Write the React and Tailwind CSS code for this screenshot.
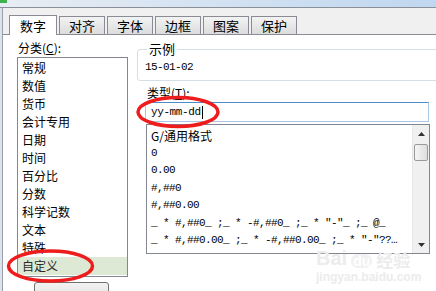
const categories = ['常规', '数值', '货币', '会计专用', '日期', '时间', '百分比', '分数', '科学记数', '文本', '特殊', '自定义'];

const formats = [
  '0',
  '0.00',
  '#,##0',
  '#,##0.00',
  '_ * #,##0_ ;_ * -#,##0_ ;_ * "-"_ ;_ @_',
  '_ * #,##0.00_ ;_ * -#,##0.00_ ;_ * "-"??…',
];

const tabs = ['对齐', '字体', '边框', '图案', '保护'];

const cjk = { fontFamily: '"Noto Sans CJK SC", "Liberation Sans", sans-serif' };
const mono = { fontFamily: '"Liberation Mono", "Noto Sans CJK SC", monospace' };

export default function App() {
  return (
    <div
      className="relative w-[436px] h-[291px] overflow-hidden bg-[#f0f0f0] text-black flex flex-col"
      style={cjk}
    >
      {/* window title strip */}
      <div className="h-[7px] shrink-0 bg-linear-to-r from-[#e7edf3] to-[#bfd7f0] flex">
        <div className="w-[7px] h-[3px] bg-[#3fb24e]" />
      </div>
      <div className="h-px shrink-0 bg-[#8a8f98]" />

      <div className="flex flex-1 min-h-0">
        <div className="w-[3px] shrink-0 bg-[#d8e3ee] border-r border-[#9aa0a6]" />

        <div className="flex-1 flex flex-col min-h-0">
          {/* tabs */}
          <div className="h-[26px] shrink-0 flex items-end pl-[6px] gap-[2px]">
            <div className="relative z-10 -mb-px h-[20px] w-[48px] bg-white border border-b-0 border-[#898c95] flex items-center justify-center text-[13px] leading-none">
              数字
            </div>
            {tabs.map((t) => (
              <div
                key={t}
                className="h-[18px] w-[46px] bg-linear-to-b from-[#f3f3f3] to-[#dcdcdc] border border-b-0 border-[#898c95] flex items-center justify-center text-[13px] leading-none"
              >
                {t}
              </div>
            ))}
          </div>

          {/* panel */}
          <div className="flex-1 min-h-0 bg-white border-t border-[#898c95] flex items-start">
            {/* left column */}
            <div className="pl-[14px] w-[129px] flex flex-col shrink-0">
              <div className="mt-[6px] h-[14px] shrink-0 text-[12px] leading-[14px] pl-px">分类(<span className="underline">C</span>):</div>
              <div className="mt-[2px] shrink-0 w-[111px] h-[220px] border border-[#828790] pt-[1px] flex flex-col">
                {categories.map((c, i) => (
                  <div
                    key={c}
                    className={`h-[18px] shrink-0 leading-[18px] text-[12px] pl-[4px] ${
                      i === categories.length - 1 ? 'bg-[#dde9d4] text-[#2a2a2a]' : ''
                    }`}
                  >
                    {c}
                  </div>
                ))}
              </div>
              <div className="mt-[5px] shrink-0 ml-[17px] w-[75px] h-[23px] border border-[#707070] rounded-[3px] bg-linear-to-b from-[#f2f2f2] to-[#dddddd] flex items-center justify-center text-[12px] pt-[8px]">
                删除(D)
              </div>
            </div>

            {/* right column */}
            <div className="flex-1 flex flex-col pl-[5px]">
              <div className="relative shrink-0 mt-[14px] -mr-[8px] h-[32px] border border-[#d5dfe5] rounded-[3px] pl-[7px] pt-[10px]">
                <div className="absolute -top-[8px] left-[9px] bg-white px-[2px] text-[13px] leading-[14px]">示例</div>
                <div className="text-[11px] tracking-[-0.6px] leading-[14px]" style={mono}>15-01-02</div>
              </div>

              <div className="mt-[5px] shrink-0 pl-[10px] h-[14px] text-[12px] leading-[14px]">
                类型(<span className="underline">T</span>):
              </div>

              <div className="mt-[2px] shrink-0 ml-[8px] w-[284px] h-[20px] border border-[#aac8e6] border-t-[#4d8cc8] flex items-center pl-[5px]">
                <span className="text-[11px] tracking-[-0.4px] leading-none" style={mono}>yy-mm-dd</span>
                <span className="w-px h-[13px] bg-black ml-px" />
              </div>

              <div className="mt-[2px] shrink-0 ml-[9px] w-[284px] h-[130px] border border-[#828790] flex">
                <div className="flex-1 pt-[2px] pl-[4px] overflow-hidden">
                  <div className="h-[17.5px] leading-[17.5px] text-[12px]">G/通用格式</div>
                  {formats.map((f) => (
                    <div
                      key={f}
                      className="h-[17.5px] leading-[17.5px] text-[11px] tracking-[-0.6px] whitespace-pre"
                      style={mono}
                    >
                      {f}
                    </div>
                  ))}
                </div>
                <div className="w-[17px] bg-[#f0f0f0] border-l border-[#e6e6e6] flex flex-col">
                  <div className="h-[17px] flex items-center justify-center">
                    <svg width="7" height="4" viewBox="0 0 7 4">
                      <path d="M3.5 0 L7 4 L0 4 Z" fill="#333" />
                    </svg>
                  </div>
                  <div className="mt-[2px] mx-px h-[17px] border border-[#9a9a9a] rounded-[2px] bg-linear-to-r from-[#f5f5f5] to-[#dedede]" />
                  <div className="flex-1" />
                  <div className="h-[17px] flex items-center justify-center">
                    <svg width="7" height="4" viewBox="0 0 7 4">
                      <path d="M0 0 L7 0 L3.5 4 Z" fill="#333" />
                    </svg>
                  </div>
                </div>
              </div>
            </div>
          </div>
        </div>
      </div>

      {/* watermark */}
      <div className="absolute left-[316px] top-[248px] flex flex-col items-start pointer-events-none select-none">
        <div className="flex items-end gap-[4px] text-[#ececec] font-bold leading-none" style={{ fontFamily: '"Liberation Sans", "Noto Sans CJK SC", sans-serif' }}>
          <span className="text-[20px]">Bai</span>
          <span className="text-[14px] rounded-full bg-[#f1f1f1] text-white px-[2px]">du</span>
          <span className="text-[17px]" style={cjk}>经验</span>
        </div>
        <div className="mt-[3px] text-[12px] text-[#ececec] font-bold leading-none" style={{ fontFamily: '"Liberation Sans", sans-serif' }}>
          jingyan.baidu.com
        </div>
      </div>

      {/* red annotation ellipses */}
      <svg className="absolute inset-0 pointer-events-none" width="436" height="291" viewBox="0 0 436 291">
        <ellipse cx="178" cy="112" rx="40" ry="14.5" fill="none" stroke="#ee1c1c" strokeWidth="3.5" />
        <ellipse cx="50.5" cy="266" rx="42" ry="15" fill="none" stroke="#ee1c1c" strokeWidth="3.5" />
      </svg>
    </div>
  );
}
